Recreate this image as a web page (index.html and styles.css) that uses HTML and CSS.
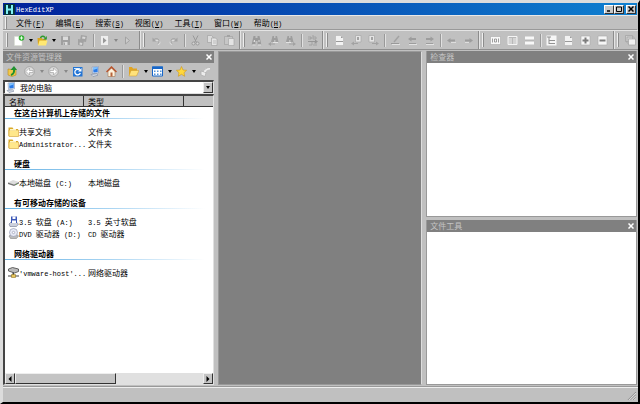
FILE: index.html
```html
<!DOCTYPE html>
<html lang="zh-CN">
<head>
<meta charset="utf-8">
<title>HexEditXP</title>
<link rel="stylesheet" href="styles.css">
</head>
<body>
<svg class="defs" aria-hidden="true">
  <symbol id="app" viewBox="0 0 11 11"><path fill="#04343c" d="M0 0h11v11H0z"/><path fill="#7ff0f4" d="M2 1h2v3.500h3V1h2v9H7V6.500H4V10H2z"/></symbol>
  <symbol id="new" viewBox="0 0 11 11"><path fill="#fff" stroke="#d8e0d0" stroke-width=".5" d="M.5 1.500h7.500V10.500H.5z"/><circle cx="7.500" cy="3" r="2.800" fill="#2fae2f"/><path stroke="#eaffea" d="M7.500 1.300v3.400M5.800 3h3.400"/></symbol>
  <symbol id="open" viewBox="0 0 11 11"><path fill="#d9a520" d="M.5 3h4l1 1H9v6H1z"/><path fill="#ffe873" d="M2.500 5.500h8L9 10.500H1z"/><path fill="none" stroke="#2c9a2c" stroke-width="1.500" d="M3.500 3C4.500.8 6.500.8 8 2.500"/><path fill="#2c9a2c" d="M9.800 1v3.500H6.300z"/></symbol>
  <symbol id="save" viewBox="0 0 11 11"><path fill="#969696" d="M1 1h9v9H1z"/><path fill="#e4e4e4" d="M3 1.500h5v3.500H3zM3.500 7h4v3h-4z"/><path fill="#999" d="M4 7.500h1V10H4z"/></symbol>
  <symbol id="saveall" viewBox="0 0 11 11"><path fill="#999" d="M4 0l6 1-1 6-6-1zM1 4l6 1-1 6-5-1z"/><path fill="#e0e0e0" d="M5.500 1.500l3 .5-.5 2-3-.5zM2.800 7.500l2.500.5-.4 2-2.400-.5z"/></symbol>
  <symbol id="run" viewBox="0 0 11 11"><path fill="#eee" stroke="#aaa" stroke-width=".5" d="M1.500.5H9.500v10h-8z"/><path fill="#999" d="M4 2.500l3.500 3L4 8.500z"/></symbol>
  <symbol id="play" viewBox="0 0 11 11"><path fill="#d0d0d0" stroke="#999" d="M3.500 2l4 3.500-4 3.500z"/></symbol>
  <symbol id="undo" viewBox="0 0 11 11"><path fill="none" stroke="#e8e8e8" d="M3 5.500h4a2 2 0 010 4"/><path fill="none" stroke="#999" d="M3 4.500C6 2 10 5 7 8.500"/><path fill="#999" d="M1.500 2.500v4h4z"/></symbol>
  <symbol id="redo" viewBox="0 0 11 11"><path fill="none" stroke="#e8e8e8" d="M8 5.500H4a2 2 0 000 4"/><path fill="none" stroke="#999" d="M8 4.500C5 2 1 5 4 8.500"/><path fill="#999" d="M9.500 2.500v4h-4z"/></symbol>
  <symbol id="cut" viewBox="0 0 11 11"><path fill="none" stroke="#8c8c8c" d="M3 .5l3.500 7M8 .5l-3.500 7"/><circle cx="3.500" cy="8.500" r="1.500" fill="#ddd" stroke="#8c8c8c"/><circle cx="7.500" cy="8.500" r="1.500" fill="#ddd" stroke="#8c8c8c"/></symbol>
  <symbol id="copy" viewBox="0 0 11 11"><path fill="#e6e6e6" stroke="#999" stroke-width=".7" d="M.5.5h4l1.500 1.500v5.500H.5z"/><path fill="#f0f0f0" stroke="#999" stroke-width=".7" d="M4.500 3h4l1.500 1.500v6H4.500z"/><path stroke="#bbb" d="M6 6h3M6 8h3"/></symbol>
  <symbol id="paste" viewBox="0 0 11 11"><path fill="#c8c8c8" stroke="#999" stroke-width=".7" d="M.5 1.500h8v8h-8z"/><path fill="#999" d="M3 0h3v2H3z"/><path fill="#efefef" stroke="#a0a0a0" stroke-width=".7" d="M4.500 3.500h5.500v7H4.500z"/></symbol>
  <symbol id="find" viewBox="0 0 11 11"><path fill="#8f8f8f" d="M2.500 1h2v2h2V1h2l1.800 8.500H6.500V6h-2v3.500H.7z"/><path fill="#e6e6e6" d="M1.500 9.500h3v1h-3zM7 9.500h3v1H7zM3 5h1v2H2.500zM7.500 5h1v2h-1z"/></symbol>
  <symbol id="findprev" viewBox="0 0 11 11"><path fill="#939393" d="M4.500 1H6v2h1.500V1H9l1.500 6h-3V5H6v2H3z"/><path fill="none" stroke="#999" d="M1 9h6"/><path fill="#999" d="M0 9l3-2v4z"/><path stroke="#eee" d="M5 7.500h5"/></symbol>
  <symbol id="findnext" viewBox="0 0 11 11"><path fill="#939393" d="M2.500 1H4v2h1.500V1H7l1.500 6h-3V5H4v2H1z"/><path fill="none" stroke="#999" d="M4 9h6"/><path fill="#999" d="M11 9L8 7v4z"/><path stroke="#eee" d="M1 7.500h5"/></symbol>
  <symbol id="replace" viewBox="0 0 11 11"><path fill="none" stroke="#999" d="M1 4h3v-2M4 4V2H1M6 0v4h3V2H6M5 7v3H2M6 10h4M7 8h3"/><path fill="none" stroke="#888" d="M1 6.500h7"/><path fill="#888" d="M8 4.500l3 2-3 2z"/></symbol>
  <symbol id="page" viewBox="0 0 11 11"><path fill="#f2f2f2" stroke="#aaa" stroke-width=".5" d="M1.500.5h5.500l2.500 2.500v7.500h-8z"/><path fill="#9a9a9a" d="M2 6h7v1H2zM7 1v2h2z"/></symbol>
  <symbol id="pageprev" viewBox="0 0 11 11"><path fill="#f0f0f0" stroke="#a0a0a0" stroke-width=".7" d="M4.500.5h5.500v6.500H4.500z"/><path fill="#999" d="M6 2h2v3H6zM0 8.500l3-2v4zM3 8h4v1H3z"/></symbol>
  <symbol id="pagenext" viewBox="0 0 11 11"><path fill="#f0f0f0" stroke="#a0a0a0" stroke-width=".7" d="M1 .5h5.500v6.500H1z"/><path fill="#999" d="M3 2h2v3H3zM11 8.500l-3-2v4zM4 8h4v1H4z"/></symbol>
  <symbol id="pen" viewBox="0 0 11 11"><path fill="none" stroke="#999" stroke-width="1.500" d="M9 1L4 7"/><path stroke="#8c8c8c" d="M1 8.500h8"/><path stroke="#eee" d="M2 9.500h8"/></symbol>
  <symbol id="back" viewBox="0 0 11 11"><path fill="#929292" d="M1 5.500L4.500 3v1.500H9v2H4.500V8z"/><path stroke="#e8e8e8" d="M5 7.500h5"/></symbol>
  <symbol id="next" viewBox="0 0 11 11"><path fill="#929292" d="M10 5.500L6.500 3v1.500H2v2h4.500V8z"/><path stroke="#e8e8e8" d="M2 7.500h4"/></symbol>
  <symbol id="markprev" viewBox="0 0 11 11"><path fill="#929292" d="M1 4L4.500 1.500v1.500H9v2H4.500v1.500z"/><path stroke="#929292" d="M2 8.500h7"/><path stroke="#eee" d="M2 9.500h8"/></symbol>
  <symbol id="marknext" viewBox="0 0 11 11"><path fill="#929292" d="M10 4L6.500 1.500v1.500H2v2h4.500v1.500z"/><path stroke="#929292" d="M2 8.500h7"/><path stroke="#eee" d="M2 9.500h8"/></symbol>
  <symbol id="bits" viewBox="0 0 11 11"><path fill="#f8f8f8" stroke="#aaa" stroke-width=".6" d="M.5 1.500h10v8H.5z"/><path fill="none" stroke="#888" stroke-width=".8" d="M2.500 3.500v4M4.500 4h2v3h-2zM8.500 3.500v4"/></symbol>
  <symbol id="cols" viewBox="0 0 11 11"><path fill="#d4d4d4" stroke="#f4f4f4" d="M1 1.500h9v8H1z"/><path fill="#b8b8b8" d="M2 2h7v1H2zM5 3h1v6H5z"/></symbol>
  <symbol id="rows" viewBox="0 0 11 11"><path fill="#f8f8f8" d="M1 1.500h9v8H1z"/><path fill="#b8b8b8" d="M1 4.500h9v2H1z"/></symbol>
  <symbol id="tree" viewBox="0 0 11 11"><path fill="#f6f6f6" d="M.5.500h10v10H.5z"/><path fill="none" stroke="#929292" d="M1 2h4M3 2v7M3 5.500h6M3 8.500h6"/></symbol>
  <symbol id="plus" viewBox="0 0 11 11"><path fill="#f6f6f6" stroke="#aaa" stroke-width=".6" d="M1 1h9v9H1z"/><path stroke="#7c7c7c" stroke-width="2" d="M5.500 2.500v6M2.500 5.500h6"/></symbol>
  <symbol id="minus" viewBox="0 0 11 11"><path fill="#f6f6f6" stroke="#aaa" stroke-width=".6" d="M1 1h9v9H1z"/><path stroke="#7c7c7c" stroke-width="2" d="M2.500 5.500h6"/></symbol>
  <symbol id="stack" viewBox="0 0 11 11"><path fill="#d0d0d0" stroke="#a0a0a0" stroke-width=".7" d="M.5.500h7v6h-7zM2 2h7v6H2z"/><path fill="#efefef" stroke="#a0a0a0" stroke-width=".7" d="M3.500 4h7v6h-7z"/></symbol>
  <symbol id="up" viewBox="0 0 11 11"><path fill="#f1c84b" stroke="#b88918" stroke-width=".6" d="M1 3l4 .5L9 3v6L5 10.500 1 9z"/><path fill="none" stroke="#1f9230" stroke-width="2" d="M4 9c3-1 3.500-3 3-6"/><path fill="#1f9230" d="M3.500 4L7 0l3 4z"/></symbol>
  <symbol id="goback" viewBox="0 0 11 11"><circle cx="5.500" cy="5.500" r="4.800" fill="#dedede" stroke="#9c9c9c" stroke-width=".8"/><path fill="#fff" stroke="#999" stroke-width=".6" d="M2 5.500L5.500 2v2.500H9v2H5.500V9z"/></symbol>
  <symbol id="gofwd" viewBox="0 0 11 11"><circle cx="5.500" cy="5.500" r="4.800" fill="#dedede" stroke="#9c9c9c" stroke-width=".8"/><path fill="#fff" stroke="#999" stroke-width=".6" d="M9 5.500L5.500 2v2.500H2v2h3.500V9z"/></symbol>
  <symbol id="refresh" viewBox="0 0 11 11"><path fill="#2374d4" d="M1 1h9.500v9.500H1z"/><path fill="#c7e4ff" d="M2 2h6v1H2z"/><path fill="none" stroke="#fff" stroke-width="1.300" d="M8 4.500A2.800 2.800 0 108.300 7"/><path fill="#fff" d="M9.500 2v3.500H6z"/></symbol>
  <symbol id="computer" viewBox="0 0 11 11"><path fill="#dfe7f5" stroke="#8396b6" stroke-width=".6" d="M3 1l6.500-.7v6.500L3.500 7.500z"/><path fill="#2a7be8" d="M4 1.700l4.700-.7v5l-4.200.6z"/><path fill="#80c4ff" d="M4 1.700l4.500-.7v1.500L4.200 4z"/><path fill="#d9dfe8" stroke="#7886a0" stroke-width=".6" d="M2 8.500l5.500-.7L9 9.200l-5 1.300z"/></symbol>
  <symbol id="home" viewBox="0 0 11 11"><path fill="#fff3dd" stroke="#a07654" stroke-width=".6" d="M2 5.500L5.500 2 9 5.500v5H2z"/><path fill="none" stroke="#b8542d" stroke-width="1.500" d="M.5 6l5-5 5 5"/><path fill="#b6633a" d="M4.500 6.500h2v4h-2z"/></symbol>
  <symbol id="favfolder" viewBox="0 0 11 11"><path fill="#e0a422" d="M1 1h3l1 1.500h4V9H1z"/><path fill="#ffe27b" stroke="#cd9928" stroke-width=".5" d="M3 4.500h8L8.500 10H1z"/></symbol>
  <symbol id="views" viewBox="0 0 11 11"><path fill="#fff" stroke="#1766c8" d="M.5 1h10v9H.5z"/><path fill="#1766c8" d="M0 .5h11V3H0z"/><path fill="#5292d6" d="M2 4.500h1.500V6H2zM5 4.500h1.500V6H5zM8 4.500h1.500V6H8zM2 7.500h1.500V9H2zM5 7.500h1.500V9H5zM8 7.500h1.500V9H8z"/></symbol>
  <symbol id="star" viewBox="0 0 11 11"><path fill="#ffd83d" stroke="#cf9718" stroke-width=".6" d="M5.500.5L7 4l3.600.3L8 6.700l.7 3.600-3.200-2-3.200 2L3 6.700.400 4.300 4 4z"/></symbol>
  <symbol id="props" viewBox="0 0 11 11"><path fill="#ececec" stroke="#aaa" stroke-width=".7" d="M1 5l5 1.500-1 4-4-1.500z"/><path fill="none" stroke="#eee" stroke-width="2" d="M5 6c0-2 2-3.500 5-3.500"/><path fill="none" stroke="#aaa" stroke-width=".6" d="M4.500 4C6 2 8 1.500 10 1.500"/></symbol>
  <symbol id="folder" viewBox="0 0 11 11"><path fill="#dba927" d="M.5 1.500h4l1 1.500h4.500v7H.5z"/><path fill="#ffe78b" stroke="#d2a033" stroke-width=".6" d="M1 4h9.500V10.500H1z"/><path fill="#fff5c2" d="M2 3h6v1.500H2z"/></symbol>
  <symbol id="disk" viewBox="0 0 11 11"><path fill="#ddd" d="M0 5.500L5 3l6 2-5 2.500z"/><path fill="#777" d="M0 5.500l6 2 5-2.500v1.500L6 9 0 7z"/><path fill="#72c15d" d="M8 6.800h1v1H8z"/></symbol>
  <symbol id="floppy" viewBox="0 0 11 11"><path fill="#ccd0dc" stroke="#70788e" stroke-width=".6" d="M1 8l2-2h5l2.500 2-2 2.500H2z"/><path fill="#3c58b8" d="M3 .5h6v6.500H3z"/><path fill="#fff" d="M4.500.5h3V3h-3zM4 4.500h4V7H4z"/></symbol>
  <symbol id="disc" viewBox="0 0 11 11"><path fill="#bbb" stroke="#858585" stroke-width=".6" d="M1 8l2-1.500h6L10.500 8l-2 2.500H2.500z"/><circle cx="5.500" cy="4.500" r="4" fill="#e6e9f5" stroke="#8b91aa" stroke-width=".6"/><circle cx="5.500" cy="4.500" r="1.200" fill="#fff" stroke="#8b91aa" stroke-width=".6"/></symbol>
  <symbol id="netdrive" viewBox="0 0 11 11"><path fill="#bbb" stroke="#444" stroke-width=".8" d="M.5 2l4-1.500L10.500 2v2.500l-4 1.500L.5 4z"/><path fill="#444" d="M4.500 5.500H6V8H4.500zM0 8.500h11v1H0z"/><path fill="#e7c55b" stroke="#836715" stroke-width=".5" d="M3.500 7.500h4v3h-4z"/></symbol>
  <symbol id="x" viewBox="0 0 6 6"><path fill="none" stroke="currentColor" stroke-width="1.500" d="M.5.500l5 5M5.500.500l-5 5"/></symbol>
</svg>

<header class="titlebar">
  <svg class="icon"><use href="#app"/></svg>
  <h1><span class="latin">HexEditXP</span></h1>
  <button class="winbtn" aria-label="最小化"><svg viewBox="0 0 6 6"><path d="M1 5h3" stroke="#000" stroke-width="1.500"/></svg></button>
  <button class="winbtn" aria-label="最大化"><svg viewBox="0 0 6 6"><path d="M.5 1h5v4.500h-5z" fill="none" stroke="#000"/></svg></button>
  <button class="winbtn close" aria-label="关闭"><svg><use href="#x"/></svg></button>
</header>

<nav class="menubar">
  <i class="grip"></i>
  <button>文件<span class="latin">(<u>F</u>)</span></button>
  <button>编辑<span class="latin">(<u>E</u>)</span></button>
  <button>搜索<span class="latin">(<u>S</u>)</span></button>
  <button>视图<span class="latin">(<u>V</u>)</span></button>
  <button>工具<span class="latin">(<u>T</u>)</span></button>
  <button>窗口<span class="latin">(<u>W</u>)</span></button>
  <button>帮助<span class="latin">(<u>H</u>)</span></button>
</nav>

<div class="toolbars">
  <div class="band"><i class="grip"></i>
    <button class="tool split" aria-label="新建"><svg><use href="#new"/></svg><i class="caret"></i></button>
    <button class="tool split" aria-label="打开"><svg><use href="#open"/></svg><i class="caret"></i></button>
    <button class="tool off" aria-label="保存"><svg><use href="#save"/></svg></button>
    <button class="tool off" aria-label="全部保存"><svg><use href="#saveall"/></svg></button>
    <i class="sep"></i>
    <button class="tool split" aria-label="运行"><svg><use href="#run"/></svg><i class="caret dim"></i></button>
    <button class="tool off" aria-label="继续"><svg><use href="#play"/></svg></button>
  </div>
  <div class="band"><i class="grip"></i>
    <button class="tool off" aria-label="撤销"><svg><use href="#undo"/></svg></button>
    <button class="tool off" aria-label="重做"><svg><use href="#redo"/></svg></button>
    <i class="sep"></i>
    <button class="tool off" aria-label="剪切"><svg><use href="#cut"/></svg></button>
    <button class="tool off" aria-label="复制"><svg><use href="#copy"/></svg></button>
    <button class="tool off" aria-label="粘贴"><svg><use href="#paste"/></svg></button>
  </div>
  <div class="band"><i class="grip"></i>
    <button class="tool off" aria-label="查找"><svg><use href="#find"/></svg></button>
    <button class="tool off" aria-label="查找上一个"><svg><use href="#findprev"/></svg></button>
    <button class="tool off" aria-label="查找下一个"><svg><use href="#findnext"/></svg></button>
    <i class="sep"></i>
    <button class="tool off" aria-label="替换"><svg><use href="#replace"/></svg></button>
  </div>
  <div class="band"><i class="grip"></i>
    <button class="tool" aria-label="转到"><svg><use href="#page"/></svg></button>
    <button class="tool off" aria-label="上一页"><svg><use href="#pageprev"/></svg></button>
    <button class="tool off" aria-label="下一页"><svg><use href="#pagenext"/></svg></button>
    <i class="sep"></i>
    <button class="tool off" aria-label="标记"><svg><use href="#pen"/></svg></button>
    <button class="tool off" aria-label="上一标记"><svg><use href="#markprev"/></svg></button>
    <button class="tool off" aria-label="下一标记"><svg><use href="#marknext"/></svg></button>
    <i class="sep"></i>
    <button class="tool off" aria-label="后退"><svg><use href="#back"/></svg></button>
    <button class="tool off" aria-label="前进"><svg><use href="#next"/></svg></button>
  </div>
  <div class="band"><i class="grip"></i>
    <button class="tool" aria-label="二进制"><svg><use href="#bits"/></svg></button>
    <button class="tool" aria-label="列"><svg><use href="#cols"/></svg></button>
    <button class="tool" aria-label="行"><svg><use href="#rows"/></svg></button>
    <i class="sep"></i>
    <button class="tool" aria-label="结构"><svg><use href="#tree"/></svg></button>
    <button class="tool" aria-label="页面"><svg><use href="#page"/></svg></button>
    <button class="tool" aria-label="展开"><svg><use href="#plus"/></svg></button>
    <button class="tool" aria-label="折叠"><svg><use href="#minus"/></svg></button>
  </div>
  <div class="band"><i class="grip"></i>
    <button class="tool" aria-label="层叠"><svg><use href="#stack"/></svg></button>
  </div>
</div>

<main class="workspace">
  <section class="explorer">
    <div class="panel-title"><h2>文件资源管理器</h2><button aria-label="关闭"><svg><use href="#x"/></svg></button></div>
    <div class="explorer-tools">
      <button class="tool" aria-label="向上"><svg><use href="#up"/></svg></button>
      <button class="tool split" aria-label="后退"><svg><use href="#goback"/></svg><i class="caret dim"></i></button>
      <button class="tool split" aria-label="前进"><svg><use href="#gofwd"/></svg><i class="caret dim"></i></button>
      <button class="tool" aria-label="刷新"><svg><use href="#refresh"/></svg></button>
      <button class="tool" aria-label="我的电脑"><svg><use href="#computer"/></svg></button>
      <button class="tool" aria-label="主目录"><svg><use href="#home"/></svg></button>
      <i class="sep"></i>
      <button class="tool split" aria-label="文件夹"><svg><use href="#favfolder"/></svg><i class="caret"></i></button>
      <button class="tool split" aria-label="查看"><svg><use href="#views"/></svg><i class="caret"></i></button>
      <button class="tool split" aria-label="收藏"><svg><use href="#star"/></svg><i class="caret"></i></button>
      <button class="tool" aria-label="属性"><svg><use href="#props"/></svg></button>
    </div>
    <div class="combo">
      <svg class="icon"><use href="#computer"/></svg>
      <select aria-label="位置"><option>我的电脑</option></select>
      <span class="drop"><i class="caret"></i></span>
    </div>
    <div class="listbox">
      <table>
        <colgroup><col class="c-name"><col class="c-type"><col></colgroup>
        <thead><tr><th>名称</th><th>类型</th><th></th></tr></thead>
        <tbody>
          <tr class="group"><th colspan="3"><div>在这台计算机上存储的文件</div></th></tr>
          <tr><td><svg class="icon"><use href="#folder"/></svg>共享文档</td><td>文件夹</td><td></td></tr>
          <tr><td><svg class="icon"><use href="#folder"/></svg><span class="latin">Administrator...</span></td><td>文件夹</td><td></td></tr>
        </tbody>
        <tbody>
          <tr class="group"><th colspan="3"><div>硬盘</div></th></tr>
          <tr><td><svg class="icon"><use href="#disk"/></svg>本地磁盘<span class="latin"> (C:)</span></td><td>本地磁盘</td><td></td></tr>
        </tbody>
        <tbody>
          <tr class="group"><th colspan="3"><div>有可移动存储的设备</div></th></tr>
          <tr><td><svg class="icon"><use href="#floppy"/></svg><span class="latin">3.5 </span>软盘<span class="latin"> (A:)</span></td><td><span class="latin">3.5 </span>英寸软盘</td><td></td></tr>
          <tr><td><svg class="icon"><use href="#disc"/></svg><span class="latin">DVD </span>驱动器<span class="latin"> (D:)</span></td><td><span class="latin">CD </span>驱动器</td><td></td></tr>
        </tbody>
        <tbody>
          <tr class="group"><th colspan="3"><div>网络驱动器</div></th></tr>
          <tr><td><svg class="icon"><use href="#netdrive"/></svg><span class="latin">'vmware-host'...</span></td><td>网络驱动器</td><td></td></tr>
        </tbody>
      </table>
      <div class="scrollbar">
        <button aria-label="向左滚动"><svg viewBox="0 0 6 6"><path d="M4.500 0v6l-3-3z"/></svg></button>
        <div class="track"><div class="thumb"></div></div>
        <button aria-label="向右滚动"><svg viewBox="0 0 6 6"><path d="M1.500 0v6l3-3z"/></svg></button>
      </div>
    </div>
  </section>
  <section class="editor"></section>
  <div class="side">
    <section class="panel">
      <div class="panel-title"><h2>检查器</h2><button aria-label="关闭"><svg><use href="#x"/></svg></button></div>
    </section>
    <section class="panel">
      <div class="panel-title"><h2>文件工具</h2><button aria-label="关闭"><svg><use href="#x"/></svg></button></div>
    </section>
  </div>
</main>

<footer class="statusbar">
  <svg viewBox="0 0 10 10"><path d="M1 10l9-9M4 10l6-6M7 10l3-3" stroke="#808080"/><path d="M2 10l8-8M5 10l5-5M8 10l2-2" stroke="#eee" stroke-width=".7"/></svg>
</footer>
</body>
</html>
```
FILE: styles.css
```css
* { box-sizing: border-box; }

body {
  margin: 0;
  height: 100vh;
  display: flex;
  flex-direction: column;
  background: #c0c0c0;
  border: solid;
  border-width: 3px 2px 2px 3px;
  border-color: #dcdcdc #000 #000 #dcdcdc;
  overflow: hidden;
  font: 8px/12px "Noto Sans CJK SC", sans-serif;
  color: #000;
}

button, select { font: inherit; color: inherit; padding: 0; margin: 0; border: 0; background: none; }
h1, h2 { margin: 0; font: inherit; }
i { display: block; flex: none; }
.defs { position: absolute; width: 0; height: 0; }
.latin { font-family: "Liberation Mono", monospace; font-size: 7px; line-height: 1; white-space: pre; }
.icon { width: 11px; height: 11px; flex: none; }

.titlebar {
  display: flex;
  align-items: center;
  flex: none;
  height: 12px;
  margin-right: 1px;
  padding: 0 1px;
  background: linear-gradient(90deg, #00209a, #0f80d0);
  color: #fff;
}
.titlebar h1 { flex: 1; padding-left: 1px; }
.winbtn {
  display: flex;
  align-items: center;
  justify-content: center;
  width: 10px;
  height: 9px;
  background: #c8c8c8;
  border: 1px solid;
  border-color: #fff #333 #333 #fff;
  color: #000;
}
.winbtn svg { width: 6px; height: 6px; }
.winbtn.close { margin-left: 2px; }

.menubar {
  display: flex;
  align-items: center;
  gap: 1px;
  flex: none;
  height: 15px;
  margin-right: 1px;
  border-top: 1px solid #e8e8e8;
  border-bottom: 1px solid #999;
}
.menubar button { padding: 0 5px; }
.menubar u { text-underline-offset: 1px; }

.grip {
  width: 2px;
  height: 12px;
  margin: 0 3px 0 2px;
  border-left: 1px solid #eee;
  border-right: 1px solid #8c8c8c;
}

.toolbars {
  display: grid;
  grid-template-columns: 136fr 100fr 83fr 156fr 135fr 25fr;
  flex: none;
  height: 20px;
  border-top: 1px solid #e4e4e4;
  border-bottom: 1px solid #909090;
}
.band { display: flex; align-items: center; min-width: 0; overflow: hidden; }
.band + .band { border-left: 1px solid #8c8c8c; box-shadow: inset 1px 0 #e4e4e4; }
.band .grip { margin: 0 3px 0 3px; height: 14px; }
.tool { display: flex; align-items: center; justify-content: center; flex: none; width: 17px; height: 16px; }
.tool svg { width: 11px; height: 11px; flex: none; }
.tool.off svg { opacity: .75; }
.tool.split { width: 23px; justify-content: space-between; padding: 0 1px 0 3px; }
.caret { width: 0; height: 0; border: solid transparent; border-width: 3px 2px 0; border-top-color: #000; }
.caret.dim { border-top-color: #888; }
.sep { width: 2px; height: 13px; margin: 0 1px 0 2px; border-left: 1px solid #999; border-right: 1px solid #e0e0e0; }

.workspace {
  display: grid;
  grid-template-columns: 211fr 205fr 211fr;
  gap: 4px;
  flex: 1;
  min-height: 0;
  padding: 1px 1px 2px 0;
}
.panel-title {
  display: flex;
  align-items: center;
  flex: none;
  height: 12px;
  padding: 0 2px 0 3px;
  background: #808080;
  color: #c4c4c4;
}
.panel-title h2 { flex: 1; }
.panel-title button { display: flex; color: #fff; }
.panel-title svg { width: 6px; height: 6px; }

.explorer { display: flex; flex-direction: column; min-width: 0; }
.explorer-tools { display: flex; align-items: center; flex: none; height: 17px; padding-left: 1px; }
.explorer-tools .split { width: 24px; }

.combo, .listbox { border: solid; border-width: 2px 1px 1px 2px; border-color: #444 #e0e0e0 #e0e0e0 #444; background: #fff; }
.combo { display: flex; align-items: center; flex: none; height: 14px; }
.combo select { flex: 1; appearance: none; padding-left: 4px; outline: 0; height: 11px; line-height: 10px; }
.drop {
  display: flex;
  align-items: center;
  justify-content: center;
  width: 10px;
  height: 11px;
  background: #c4c4c4;
  border: 1px solid;
  border-color: #eee #333 #333 #eee;
}

.listbox { flex: 1; display: flex; flex-direction: column; min-height: 0; }
table { width: 100%; table-layout: fixed; border-collapse: separate; border-spacing: 0; }
.c-name { width: 79px; }
.c-type { width: 100px; }
th, td { height: 12px; padding: 0; text-align: left; font-weight: 400; white-space: nowrap; }
td { line-height: 12px; vertical-align: top; }
td:first-child { padding-left: 3px; }
td:nth-child(2) { padding-left: 4px; }
td .icon { vertical-align: top; }
thead th { height: 11px; line-height: 9px; padding-left: 4px; background: #c0c0c0; border-right: 1px solid #333; border-bottom: 1px solid #333; }
thead th:last-child { border-right: 0; }
.group th { padding: 8px 0 7px; font-weight: 700; }
tbody:nth-of-type(1) .group th { padding-top: 0; }
.group div {
  padding-left: 9px;
  line-height: 12px;
  background: linear-gradient(90deg, #66b2e4, #a8d4f2 50%, #fff 96%) 0 100% / 100% 1px no-repeat;
}

.scrollbar { display: flex; flex: none; height: 11px; margin-top: auto; background: #e0e0e0; }
.scrollbar button { display: flex; align-items: center; justify-content: center; width: 10px; }
.scrollbar button svg { width: 6px; height: 6px; }
.scrollbar button, .thumb { background: #c4c4c4; border: 1px solid; border-color: #eee #333 #333 #eee; }
.track { flex: 1; }
.thumb { width: 54%; height: 100%; }

.editor { background: #808080; border: 1px solid #999; border-right-color: #ddd; }
.side { display: grid; grid-template-rows: 1fr 1fr; gap: 3px; min-width: 0; }
.panel { background: #fff; border: 1px solid #999; border-top: 0; }

.statusbar {
  display: flex;
  justify-content: flex-end;
  align-items: flex-end;
  flex: none;
  height: 15px;
  padding: 0 2px 2px 0;
  border-top: 1px solid #eee;
  box-shadow: 0 -1px #999;
}
.statusbar svg { width: 9px; height: 9px; }
```
